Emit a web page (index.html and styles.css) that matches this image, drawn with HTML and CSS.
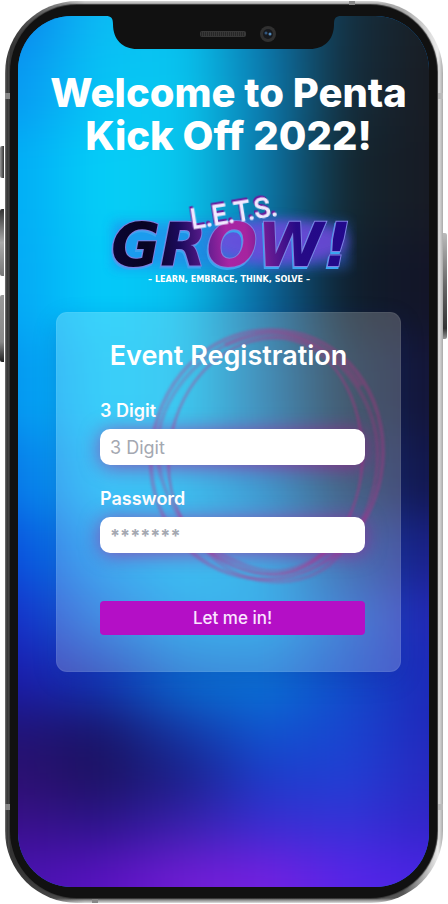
FILE: index.html
```html
<!DOCTYPE html>
<html lang="en">
<head>
<meta charset="utf-8">
<meta name="viewport" content="width=device-width, initial-scale=1">
<title>Penta Kick Off 2022</title>
<link rel="stylesheet" href="styles.css">
</head>
<body>
<div class="phone">
  <span class="key key-mute"></span>
  <span class="key key-up"></span>
  <span class="key key-down"></span>
  <span class="key key-power"></span>
  <span class="band band-tl"></span>
  <span class="band band-tr"></span>
  <span class="band band-bl"></span>
  <span class="band band-br"></span>
  <span class="band-h band-top"></span>
  <span class="band-h band-bottom"></span>
  <div class="bezel">
    <main class="screen">
      <svg class="backdrop" viewBox="0 0 411 871" preserveAspectRatio="none" aria-hidden="true">
        <defs>
          <filter id="soft" filterUnits="userSpaceOnUse" x="-100" y="-150" width="611" height="1171" color-interpolation-filters="sRGB"><feGaussianBlur stdDeviation="20 24"/></filter>
          <linearGradient id="r0" gradientUnits="userSpaceOnUse" x1="0" x2="411" y1="0" y2="0"><stop offset="0" stop-color="#0b84ec"/><stop offset=".2" stop-color="#0cbcf4"/><stop offset=".4" stop-color="#08c2f0"/><stop offset=".6" stop-color="#0b74ac"/><stop offset=".8" stop-color="#142f40"/><stop offset="1" stop-color="#191e24"/></linearGradient>
          <linearGradient id="r1" href="#r0"><stop offset="0" stop-color="#0898f2"/><stop offset=".2" stop-color="#07c4f5"/><stop offset=".4" stop-color="#08c6f0"/><stop offset=".6" stop-color="#0b7ab0"/><stop offset=".8" stop-color="#142d3c"/><stop offset="1" stop-color="#191b22"/></linearGradient>
          <linearGradient id="r2" href="#r0"><stop offset="0" stop-color="#02acf6"/><stop offset=".2" stop-color="#05cff8"/><stop offset=".4" stop-color="#08c6ee"/><stop offset=".6" stop-color="#0b78ac"/><stop offset=".8" stop-color="#14262f"/><stop offset="1" stop-color="#171a24"/></linearGradient>
          <linearGradient id="r3" href="#r0"><stop offset="0" stop-color="#05a8f5"/><stop offset=".2" stop-color="#03ccfb"/><stop offset=".4" stop-color="#08bfee"/><stop offset=".6" stop-color="#0b68a0"/><stop offset=".8" stop-color="#101e2a"/><stop offset="1" stop-color="#131428"/></linearGradient>
          <linearGradient id="r4" href="#r0"><stop offset="0" stop-color="#0595f0"/><stop offset=".2" stop-color="#05c4fa"/><stop offset=".4" stop-color="#0abcee"/><stop offset=".6" stop-color="#1470a8"/><stop offset=".8" stop-color="#122c44"/><stop offset="1" stop-color="#14143a"/></linearGradient>
          <linearGradient id="r5" href="#r0"><stop offset="0" stop-color="#0878e8"/><stop offset=".2" stop-color="#08b6f8"/><stop offset=".4" stop-color="#0cabea"/><stop offset=".6" stop-color="#1078c0"/><stop offset=".8" stop-color="#16365c"/><stop offset="1" stop-color="#131550"/></linearGradient>
          <linearGradient id="r6" href="#r0"><stop offset="0" stop-color="#0a50dc"/><stop offset=".2" stop-color="#0a94ee"/><stop offset=".4" stop-color="#08b0f0"/><stop offset=".6" stop-color="#0c9ce0"/><stop offset=".8" stop-color="#174c98"/><stop offset="1" stop-color="#1a1d88"/></linearGradient>
          <linearGradient id="r7" href="#r0"><stop offset="0" stop-color="#1530c8"/><stop offset=".2" stop-color="#1470dc"/><stop offset=".4" stop-color="#0a9ce8"/><stop offset=".6" stop-color="#089ce6"/><stop offset=".8" stop-color="#1760c8"/><stop offset="1" stop-color="#2424b4"/></linearGradient>
          <linearGradient id="r8" href="#r0"><stop offset="0" stop-color="#1a1cac"/><stop offset=".2" stop-color="#1338b8"/><stop offset=".4" stop-color="#0a6cd0"/><stop offset=".6" stop-color="#0a74d4"/><stop offset=".8" stop-color="#104cc8"/><stop offset="1" stop-color="#1c28b8"/></linearGradient>
          <linearGradient id="r9" href="#r0"><stop offset="0" stop-color="#201478"/><stop offset=".2" stop-color="#18146a"/><stop offset=".4" stop-color="#1438a8"/><stop offset=".6" stop-color="#0e58d0"/><stop offset=".8" stop-color="#1846d0"/><stop offset="1" stop-color="#2028bc"/></linearGradient>
          <linearGradient id="r10" href="#r0"><stop offset="0" stop-color="#2c1070"/><stop offset=".2" stop-color="#1c1260"/><stop offset=".4" stop-color="#1a2088"/><stop offset=".6" stop-color="#1c3cc8"/><stop offset=".8" stop-color="#2040d4"/><stop offset="1" stop-color="#2828c0"/></linearGradient>
          <linearGradient id="r11" href="#r0"><stop offset="0" stop-color="#3a108c"/><stop offset=".2" stop-color="#2c148c"/><stop offset=".4" stop-color="#3820ac"/><stop offset=".6" stop-color="#3a2cd0"/><stop offset=".8" stop-color="#3632d8"/><stop offset="1" stop-color="#3224c8"/></linearGradient>
          <linearGradient id="r12" href="#r0"><stop offset="0" stop-color="#4812b0"/><stop offset=".2" stop-color="#5812c0"/><stop offset=".4" stop-color="#701cd4"/><stop offset=".6" stop-color="#7420e0"/><stop offset=".8" stop-color="#5824e8"/><stop offset="1" stop-color="#4824e4"/></linearGradient>
        </defs>
        <g filter="url(#soft)">
          <rect x="-80" y="-120" width="571" height="151" fill="url(#r0)"/>
          <rect x="-80" y="30" width="571" height="81" fill="url(#r1)"/>
          <rect x="-80" y="110" width="571" height="111" fill="url(#r2)"/>
          <rect x="-80" y="220" width="571" height="101" fill="url(#r3)"/>
          <rect x="-80" y="320" width="571" height="101" fill="url(#r4)"/>
          <rect x="-80" y="420" width="571" height="81" fill="url(#r5)"/>
          <rect x="-80" y="500" width="571" height="71" fill="url(#r6)"/>
          <rect x="-80" y="570" width="571" height="61" fill="url(#r7)"/>
          <rect x="-80" y="630" width="571" height="61" fill="url(#r8)"/>
          <rect x="-80" y="690" width="571" height="46" fill="url(#r9)"/>
          <rect x="-80" y="735" width="571" height="51" fill="url(#r10)"/>
          <rect x="-80" y="785" width="571" height="51" fill="url(#r11)"/>
          <rect x="-80" y="835" width="571" height="160" fill="url(#r12)"/>
        </g>
      </svg>
      <svg class="notch" viewBox="0 0 235 33" aria-hidden="true">
        <path d="M0 0H235V0C230 0 228 2 228 8C228 24 218 33 204 33H31C17 33 7 24 7 8C7 2 5 0 0 0Z" fill="#111"/>
        <rect x="94" y="15" width="46" height="6" rx="2" fill="#383838"/>
        <path d="M95 17H139M95 19H139" stroke="#171717" stroke-dasharray="1 1"/>
        <circle cx="162" cy="18" r="8" fill="#303030"/>
        <circle cx="162" cy="18" r="5" fill="#17191d"/>
        <circle cx="160" cy="17" r="1.5" fill="#31557c"/>
        <circle cx="164" cy="18" r="1.5" fill="#538bbd"/>
      </svg>
      <h1 class="title">Welcome to Penta<br>Kick Off 2022!</h1>
      <svg class="logo" viewBox="0 0 256 104" role="img" aria-label="L.E.T.S. Grow! Learn, Embrace, Think, Solve">
        <defs>
          <filter id="glow" x="-20%" y="-40%" width="140%" height="180%"><feGaussianBlur stdDeviation="6"/></filter>
          <linearGradient id="word" gradientUnits="userSpaceOnUse" x1="14" y1="70" x2="248" y2="50"><stop offset="0" stop-color="#0a0533"/><stop offset=".14" stop-color="#080322"/><stop offset=".28" stop-color="#1c0a5c"/><stop offset=".38" stop-color="#5a1c8c"/><stop offset=".48" stop-color="#a825a4"/><stop offset=".56" stop-color="#a6249f"/><stop offset=".66" stop-color="#641a92"/><stop offset=".78" stop-color="#260a86"/><stop offset="1" stop-color="#22098c"/></linearGradient>
        </defs>
        <path d="M12 38H248V84H12Z" fill="#3568e8" opacity=".45" filter="url(#glow)"/>
        <ellipse cx="178" cy="58" rx="68" ry="22" fill="#7647de" opacity=".8" filter="url(#glow)"/>
        <text class="grow" x="10" y="82">GROW!</text>
        <text class="lets" x="91" y="45" transform="rotate(-9 91 45)">L.E.T.S.</text>
        <text class="tagline" x="128" y="98" text-anchor="middle">– LEARN, EMBRACE, THINK, SOLVE –</text>
      </svg>
      <section class="card">
        <svg class="ring" viewBox="0 0 250 268" fill="none" aria-hidden="true">
          <g stroke="#c42a85">
            <path d="M129 7C65 7 14 62 10 130C6 201 58 257 126 256C192 255 243 196 242 127C241 57 191 6 129 7Z" stroke-width="4" opacity=".32"/>
            <path d="M135 15C76 16 33 68 28 129C23 190 60 238 113 250C175 262 217 203 221 143C225 76 190 16 135 15Z" stroke-width="3" opacity=".35"/>
            <path d="M119 10C165 3 213 45 230 92C248 143 227 207 188 242C155 269 94 262 67 229C40 202 12 161 17 115C22 67 68 19 119 10Z" stroke-width="4" opacity=".25"/>
            <path d="M84 22C140 0 188 15 220 63" stroke-width="5" opacity=".25"/>
            <path d="M48 208C64 226 79 233 106 244C143 258 171 244 209 211" stroke-width="6" opacity=".25"/>
          </g>
        </svg>
        <h2 class="heading">Event Registration</h2>
        <form class="form">
          <label for="digit">3 Digit</label>
          <input id="digit" type="text" placeholder="3 Digit">
          <label for="password">Password</label>
          <input id="password" type="password" placeholder="*******">
          <button type="submit">Let me in!</button>
        </form>
      </section>
    </main>
  </div>
</div>
</body>
</html>
```
FILE: styles.css
```css
* { box-sizing: border-box; }

body {
  margin: 0;
  background: #fff;
  color: #fff;
  font-family: Inter, "Open Sans", sans-serif;
}

.phone {
  position: relative;
  display: flex;
  min-height: calc(100vh - 2px);
  margin: 1px 5px;
  padding: 4px 6px 5px 5px;
  border-radius: 72px;
  background: linear-gradient(90deg, #777 0, #333 2px, #4b4b4b 4px, #333 5px, transparent 80px, transparent calc(100% - 40px), #ececec calc(100% - 5px), #aaa 100%), linear-gradient(#d4d4d4 0, #aaa 3px, #777 50%, #555 calc(100% - 5px), #ddd 100%);
}

.bezel {
  flex: 1;
  display: flex;
  padding: 11px 8px;
  border-radius: 67px;
  background: #111;
  box-shadow: 0 0 1px 1px #333;
}

.screen {
  position: relative;
  flex: 1;
  min-width: 0;
  overflow: hidden;
  border-radius: 54px;
  background: #0b74d2;
}

.backdrop {
  position: absolute;
  inset: 0;
  width: 100%;
  height: 100%;
}

.notch {
  position: relative;
  display: block;
  width: 235px;
  height: 33px;
  margin: 0 auto;
}

.key {
  position: absolute;
  left: -5px;
  width: 4px;
  border-radius: 2px 0 0 2px;
  background: linear-gradient(90deg, #999, #333);
}
.key-mute { top: 145px; height: 32px; }
.key-up { top: 208px; height: 67px; background: linear-gradient(#333, #aaa 50%, #777); }
.key-down { top: 294px; height: 67px; background: linear-gradient(#999, #888 70%, #222); }
.key-power {
  left: auto;
  right: -4px;
  top: 232px;
  height: 106px;
  border-radius: 0 2px 2px 0;
  background: linear-gradient(#bbb, #666 50%, #333 90%, #999);
}

.band, .band-h { position: absolute; background: #888; }
.band { width: 5px; height: 6px; }
.band-tl { left: 0; top: 92px; }
.band-tr { right: 0; top: 92px; background: #bbb; }
.band-bl { left: 0; bottom: 93px; }
.band-br { right: 0; bottom: 93px; background: #bbb; }
.band-h { width: 6px; height: 4px; }
.band-top { top: 0; right: 88px; }
.band-bottom { bottom: 0; left: 87px; }

.title {
  position: relative;
  margin: 22px 0 0 10px;
  font-size: 40px;
  line-height: 43px;
  font-weight: 800;
  text-align: center;
  white-space: nowrap;
}

.logo {
  position: relative;
  display: block;
  width: 256px;
  height: 104px;
  margin: 27px auto 0;
  left: 5px;
}

.grow {
  fill: url(#word);
  stroke: #7d7fe0;
  stroke-width: 2px;
  paint-order: stroke;
  font: italic bold 60px "DejaVu Sans", sans-serif;
  filter: drop-shadow(-1px 2px 0 #3aa4f0);
}

.lets {
  fill: #f1eaff;
  stroke: #f1eaff;
  stroke-width: 1px;
  font: 27px Roboto, sans-serif;
  filter: drop-shadow(-1px -2px 0 #6b189b);
}

.tagline {
  fill: #fff;
  font: bold 9px "DejaVu Sans Condensed", sans-serif;
}

.card {
  position: relative;
  margin: 24px 28px 0 38px;
  padding: 28px 35px 36px 43px;
  border: 1px solid rgba(255, 255, 255, .06);
  border-radius: 11px;
  background: rgba(255, 255, 255, .21);
  box-shadow: 0 8px 24px rgba(20, 20, 140, .2);
}

.ring {
  position: absolute;
  left: 84px;
  top: 10px;
  width: 250px;
  height: 268px;
  filter: blur(1px);
}

.heading {
  position: relative;
  margin: 0 8px 0 0;
  font-size: 27px;
  line-height: 30px;
  font-weight: 600;
  text-align: center;
  white-space: nowrap;
}

.form {
  position: relative;
  display: flex;
  flex-direction: column;
  margin-top: 29px;
}

label {
  margin-bottom: 7px;
  font-size: 18px;
  line-height: 22px;
  font-weight: 600;
}

input {
  width: 100%;
  height: 36px;
  margin: 0 0 23px;
  padding: 0 10px;
  border: 0;
  border-radius: 10px;
  background: #fff;
  color: #333;
  font: 18px/24px Inter, sans-serif;
  box-shadow: 0 2px 20px rgba(184, 14, 142, .6);
}

input::placeholder { color: #a4a8b1; opacity: 1; }
input[type="password"] { font-weight: 700; }

button {
  height: 34px;
  margin-top: 25px;
  padding: 0;
  border: 0;
  border-radius: 4px;
  background: #b40fc6;
  color: #fbe6ff;
  font: 500 17px/24px Inter, sans-serif;
}
```
